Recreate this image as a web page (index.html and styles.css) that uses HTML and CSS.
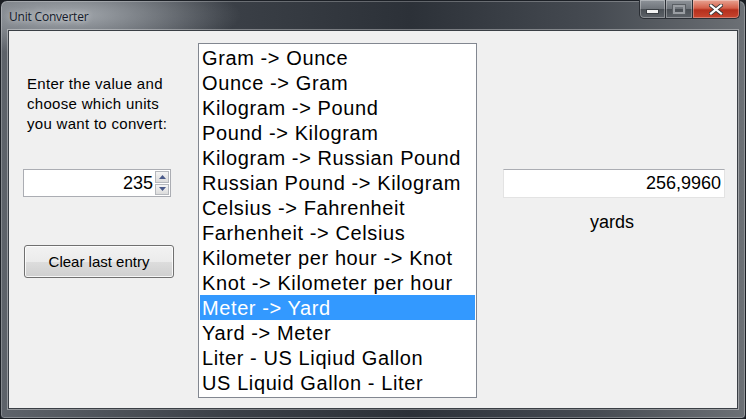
FILE: index.html
```html
<!DOCTYPE html>
<html>
<head>
<meta charset="utf-8">
<link rel="stylesheet" href="styles.css">
<title>Unit Converter</title>
</head>
<body>
<div class="window">
  <div class="titlebar">
    <div class="title">Unit Converter</div>
    <div class="caption-buttons">
      <div class="cbtn minimize"><span class="min-glyph"></span></div>
      <div class="cbtn maximize"><span class="max-glyph"></span></div>
      <div class="cbtn close"><svg width="14" height="11" viewBox="0 0 14 11"><path d="M2 1.5 L12 9.5 M12 1.5 L2 9.5" stroke="#3a3a3a" stroke-width="4" stroke-linecap="square"/><path d="M2 1.5 L12 9.5 M12 1.5 L2 9.5" stroke="#ffffff" stroke-width="2.2" stroke-linecap="square"/></svg></div>
    </div>
  </div>
  <div class="client">
    <div class="left-col">
      <div class="prompt">Enter the value and<br>choose which units<br>you want to convert:</div>
      <div class="numeric">
        <div class="numeric-value">235</div>
        <div class="spinner">
          <div class="spin up"><svg width="7" height="4" viewBox="0 0 7 4"><path d="M0 4 L3.5 0 L7 4 Z" fill="#4a5a8a"/></svg></div>
          <div class="spin down"><svg width="7" height="4" viewBox="0 0 7 4"><path d="M0 0 L3.5 4 L7 0 Z" fill="#4a5a8a"/></svg></div>
        </div>
      </div>
      <div class="button">Clear last entry</div>
    </div>
    <div class="listbox">
      <div class="item">Gram -&gt; Ounce</div>
      <div class="item">Ounce -&gt; Gram</div>
      <div class="item">Kilogram -&gt; Pound</div>
      <div class="item">Pound -&gt; Kilogram</div>
      <div class="item">Kilogram -&gt; Russian Pound</div>
      <div class="item">Russian Pound -&gt; Kilogram</div>
      <div class="item">Celsius -&gt; Fahrenheit</div>
      <div class="item">Farhenheit -&gt; Celsius</div>
      <div class="item">Kilometer per hour -&gt; Knot</div>
      <div class="item">Knot -&gt; Kilometer per hour</div>
      <div class="item selected">Meter -&gt; Yard</div>
      <div class="item">Yard -&gt; Meter</div>
      <div class="item">Liter - US Liqiud Gallon</div>
      <div class="item">US Liquid Gallon - Liter</div>
    </div>
    <div class="right-col">
      <div class="output">256,9960</div>
      <div class="unit-label">yards</div>
    </div>
  </div>
</div>
</body>
</html>
```

FILE: styles.css
```css
html, body {
  margin: 0;
  padding: 0;
  background: #1a1d22;
  width: 746px;
  height: 419px;
  overflow: hidden;
}

.window {
  width: 746px;
  height: 419px;
  box-sizing: border-box;
  border: 1px solid #1c2026;
  border-radius: 7px 7px 4px 4px;
  padding: 0 7px 9px 7px;
  display: flex;
  flex-direction: column;
  background:
    radial-gradient(ellipse 170px 40px at 70px 14px, rgba(190,195,200,0.75), rgba(190,195,200,0) 100%),
    linear-gradient(90deg, #5e636a 0%, #3b4047 30%, #2c3138 55%, #464b52 80%, #6c7075 100%);
  box-shadow: inset 0 0 0 1px rgba(255,255,255,0.25);
}

.titlebar {
  height: 29px;
  display: flex;
  justify-content: space-between;
  align-items: flex-start;
  flex: none;
}

.title {
  font-family: "Open Sans", "Noto Sans", sans-serif;
  font-size: 12px;
  color: #141a2a;
  margin-top: 7px;
  margin-left: 1px;
  text-shadow: 0 0 6px rgba(255,255,255,0.9);
  letter-spacing: -0.2px;
}

.caption-buttons {
  display: flex;
  margin-top: -1px;
  margin-right: -2px;
}

.cbtn {
  height: 19px;
  box-sizing: border-box;
  border: 1px solid #2a2e34;
  border-top: none;
  display: flex;
  align-items: center;
  justify-content: center;
  box-shadow: inset 0 0 0 1px rgba(255,255,255,0.3);
}

.minimize {
  width: 27px;
  border-radius: 0 0 0 5px;
  background: linear-gradient(180deg, #8e9399 0%, #6f747a 50%, #4a4f55 52%, #5d6268 100%);
}

.maximize {
  width: 27px;
  border-left: none;
  background: linear-gradient(180deg, #8e9399 0%, #6f747a 50%, #4a4f55 52%, #5d6268 100%);
}

.close {
  width: 47px;
  border-left: none;
  border-radius: 0 0 5px 0;
  background: linear-gradient(180deg, #e8a493 0%, #d4604a 45%, #b5301d 55%, #c7452e 100%);
}

.min-glyph {
  display: block;
  width: 11px;
  height: 3px;
  background: #f2f2f2;
  border: 1px solid #3a3f44;
  margin-top: 5px;
}

.max-glyph {
  display: block;
  width: 8px;
  height: 5px;
  border: 2px solid #9a9ea3;
  outline: 1px solid #5a5f64;
}

.client {
  flex: 1;
  background: #f0f0f0;
  border: 1px solid #3a3f45;
  outline: 1px solid rgba(255,255,255,0.35);
  display: flex;
  align-items: flex-start;
  font-family: "Liberation Sans", Arial, sans-serif;
  color: #000;
}

.left-col {
  width: 189px;
  flex: none;
  box-sizing: border-box;
  padding: 43px 0 0 14px;
  display: flex;
  flex-direction: column;
  align-items: flex-start;
}

.prompt {
  font-size: 15px;
  line-height: 20px;
  margin-left: 4px;
  letter-spacing: 0.3px;
}

.numeric {
  margin-top: 35px;
  width: 148px;
  height: 28px;
  box-sizing: border-box;
  border: 1px solid #abadb3;
  background: #fff;
  display: flex;
  align-items: stretch;
}

.numeric-value {
  flex: 1;
  text-align: right;
  font-size: 18px;
  line-height: 26px;
  padding-right: 2px;
}

.spinner {
  width: 14px;
  display: flex;
  flex-direction: column;
  padding: 1px 1px 1px 0;
  gap: 1px;
}

.spin {
  flex: 1;
  background: linear-gradient(180deg, #f4f4f4, #dcdcdc);
  border: 1px solid #b5b8bd;
  display: flex;
  align-items: center;
  justify-content: center;
}

.button {
  margin-top: 48px;
  margin-left: 1px;
  width: 150px;
  height: 33px;
  box-sizing: border-box;
  border: 1px solid #707070;
  border-radius: 3px;
  background: linear-gradient(180deg, #f2f2f2 0%, #ebebeb 50%, #dddddd 51%, #cfcfcf 100%);
  box-shadow: inset 0 0 0 1px rgba(255,255,255,0.8);
  font-size: 15px;
  display: flex;
  align-items: center;
  justify-content: center;
}

.listbox {
  margin-top: 12px;
  width: 279px;
  height: 355px;
  box-sizing: border-box;
  border: 1px solid #828790;
  background: #fff;
  padding: 1px;
  flex: none;
}

.item {
  height: 25px;
  font-size: 20px;
  line-height: 27px;
  padding-left: 2px;
  letter-spacing: 0.6px;
  white-space: nowrap;
}

.item.selected {
  background: #3399ff;
  color: #fff;
}

.right-col {
  margin-left: 26px;
  padding-top: 138px;
  width: 222px;
  display: flex;
  flex-direction: column;
  align-items: center;
}

.output {
  width: 222px;
  height: 29px;
  box-sizing: border-box;
  border: 1px solid #e3e3e3;
  border-top-color: #abadb3;
  background: #fff;
  font-size: 18px;
  line-height: 27px;
  text-align: right;
  padding-right: 3px;
}

.unit-label {
  margin-top: 13px;
  font-size: 18px;
  line-height: 22px;
  margin-left: -4px;
}
```
